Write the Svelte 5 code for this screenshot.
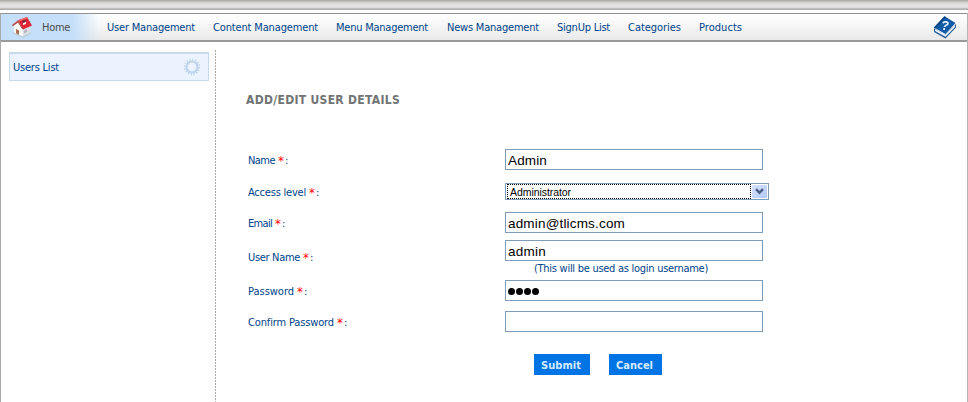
<script>
  const links = [
    { label: 'User Management', width: 88, gap: 18 },
    { label: 'Content Management', width: 105, gap: 18 },
    { label: 'Menu Management', width: 92, gap: 19 },
    { label: 'News Management', width: 92, gap: 18 },
    { label: 'SignUp List', width: 53, gap: 18 },
    { label: 'Categories', width: 53, gap: 18 },
    { label: 'Products', width: 43, gap: 0 }
  ];

  function fit(node, width) {
    const natural = node.getBoundingClientRect().width;
    node.style.letterSpacing = `${(width - natural) / node.textContent.length}px`;
  }
</script>

{#snippet label(text, width, top)}
  <div class="label" style:margin-top="{top}px">
    <span use:fit={width}>{text}</span><b>*</b><span>:</span>
  </div>
{/snippet}

<div class="page">
  <div class="strip"></div>
  <div class="shell">
    <nav>
      <div class="home">
        <svg width="22" height="22" viewBox="0 0 22 22">
          <path d="M1 17 4 16 12 20 20 16 20 18 12 22Z" fill="#a8b4a8" opacity=".4" />
          <path d="M11 12 19 8.5V16.5L11 20.5Z" fill="#dfe0e5" />
          <path d="M2.5 8.5 7 5 12 13V20.5L3 16.5Z" fill="#faf8f5" />
          <path d="M7 4.2 16 1 21 9.5 12 13.5Z" fill="#e02434" />
          <path d="M7 4.2 16 1 16.8 2.2 7.8 5.6Z" fill="#ee6a70" />
          <path d="M7 4.2 1 9 2 10.3 7 6.4 11 13 12.5 13.2Z" fill="#b8484c" />
          <path d="M12 5.5 15 4.5V8L12 9Z" fill="#fff" /><path d="M11.5 4.7 14.8 3.7V6L11.8 7.2Z" fill="#702630" />
          <path d="M5 13 8 14.5V18.8L5 17.3Z" fill="#a8714f" />
          <path d="M13 14.4 16 13V16L13 17.4Z" fill="#b3b7c1" />
        </svg>
        <span use:fit={28}>Home</span>
      </div>
      {#each links as l}
        <div class="link" style:width="{l.width}px" style:margin-right="{l.gap}px"><span use:fit={l.width}>{l.label}</span></div>
      {/each}
      <svg class="help" width="24" height="24" viewBox="0 0 24 24">
        <path d="M1 13 12 20 23 9V12.5L12.5 23.5 1 17Z" fill="#245c98" />
        <path d="M2 14 12.3 19.8 22 10V12L12.5 21.8 2 16Z" fill="#f2f7fc" />
        <path d="M1 12.5 11.5 1.2 22.5 8 12.5 19Z" fill="#125ba6" />
        <path d="M1 12.5 11.5 1.2 13 2.2 2.7 13.5Z" fill="#0a4482" />
        <path d="M9.8 8C11.5 6.4 15 6.6 15 8.5 15 10.2 12 9.8 11.5 12M10.2 14H12" fill="none" stroke="#d9eafa" stroke-width="1.8" />
      </svg>
    </nav>
    <div class="body">
      <aside>
        <div class="item">
          <span use:fit={46}>Users List</span>
          <svg width="18" height="18" viewBox="0 0 18 18" fill="none" stroke="#c0d5eb">
            <circle cx="9" cy="9" r="5.5" stroke-width="2.2" />
            <circle cx="9" cy="9" r="7.3" stroke-width="1.8" stroke-dasharray="1.35 1.516" />
          </svg>
        </div>
      </aside>
      <main>
        <h1><span use:fit={154}>ADD/EDIT USER DETAILS</span></h1>
        <form>
          <div class="labels">
            {@render label('Name', 27, 4)}
            {@render label('Access level', 58, 18)}
            {@render label('Email', 24, 17)}
            {@render label('User Name', 52, 20)}
            {@render label('Password', 46, 20)}
            {@render label('Confirm Password', 86, 17)}
          </div>
          <div class="fields">
            <div class="input"><span use:fit={39}>Admin</span></div>
            <div class="select">
              <div class="value"><span use:fit={61}>Administrator</span></div>
              <div class="arrow">
                <svg width="9" height="7" viewBox="0 0 9 7"><path d="M1 1.2 4.5 4.7 8 1.2" fill="none" stroke="#4d6185" stroke-width="2.4" /></svg>
              </div>
            </div>
            <div class="input email"><span use:fit={117}>admin@tlicms.com</span></div>
            <div class="input user"><span use:fit={38}>admin</span></div>
            <div class="note"><span use:fit={174}>(This will be used as login username)</span></div>
            <div class="input"><i></i><i></i><i></i><i></i></div>
            <div class="input confirm"></div>
            <div class="buttons">
              <div class="button submit"><span use:fit={40}>Submit</span></div>
              <div class="button"><span use:fit={37}>Cancel</span></div>
            </div>
          </div>
        </form>
      </main>
    </div>
  </div>
</div>

<style>
  :global(body) { background: #fff; }
  .page, .page * { box-sizing: border-box; }
  .page {
    width: 968px; height: 402px; overflow: hidden;
    font: 11px/14px 'DejaVu Sans Condensed', 'DejaVu Sans', sans-serif;
    font-stretch: condensed; color: #00438a; white-space: nowrap;
  }
  svg { display: block; flex: none; }
  .strip {
    height: 10px; margin-bottom: 3px;
    background: linear-gradient(#aaa6a6 0, #b5b1b1 1px, #d0cdcd 2px, #dedcdc 4px, #e7e5e5 6px, #d8d6d6 8px, #a9a7a7 9px, #b9b7b7 10px);
  }
  .shell { height: 389px; border-left: 1px solid #aaa; border-right: 1px solid #b5b5b5; }
  nav {
    height: 29px; display: flex; align-items: center;
    border-top: 1px solid #909090; border-bottom: 2px solid #999;
    background: linear-gradient(#fff, #f6f6f6 45%, #e9e9e9);
  }
  .home {
    width: 106px; height: 26px; padding: 0 0 0 10px; display: flex; align-items: center; gap: 9px; color: #4c4c4c;
    background: linear-gradient(90deg, #c5dffb 0, #c5dffb 72px, transparent 98px);
  }
  .home span { padding-top: 2px; }
  .link { flex: none; padding-top: 2px; }
  .help { margin-left: auto; margin-right: 10px; }
  .body { display: flex; padding-top: 8px; }
  aside { width: 214px; padding: 2px 0 0 8px; }
  .item {
    width: 200px; height: 29px; padding: 0 7px 0 3px; display: flex; align-items: center; justify-content: space-between;
    border: 1px solid #c7daed; border-top-width: 2px; background: #ebf4fe;
  }
  .item span { padding-top: 2px; }
  main {
    height: 360px; flex: 1; padding: 43px 0 0 31px;
    background: repeating-linear-gradient(#aaa 0 2px, transparent 2px 3px) 0 0 / 1px 100% no-repeat;
  }
  h1 { margin: 0; font-size: 12px; line-height: 15px; font-weight: 700; color: #707474; }
  form { display: flex; padding: 41px 0 0 2px; }
  .labels { width: 257px; padding-top: 1px; }
  .label { height: 14px; display: flex; }
  .label b { color: #f00; font-weight: 400; font-size: 13px; margin-left: 3px; width: 7px; }
  .fields { width: 264px; }
  .input {
    width: 258px; height: 21px; padding: 2px 0 0 2px; display: flex; align-items: center;
    border: 1px solid #7f9db9; background: #fff; color: #000; font: 13.5px/17px 'Liberation Sans', sans-serif;
  }
  .input i { width: 7px; height: 7px; margin-right: 1px; border-radius: 50%; background: #000; }
  .select {
    height: 17px; margin: 13px 0 12px; padding: 1px; display: flex; border: 1px solid #7f9db9;
    color: #000; font: 10.5px/13px 'Liberation Sans', sans-serif;
  }
  .value { width: 245px; height: 15px; margin-top: -1px; padding-left: 2px; border: 1px dotted #000; line-height: 14px; }
  .arrow {
    width: 15px; height: 13px; margin-left: 1px; display: flex; align-items: center; justify-content: center;
    border-radius: 1px; background: linear-gradient(135deg, #d7e3fe, #b3c8f7);
  }
  .user { margin-top: 7px; }
  .note { height: 19px; padding: 1px 0 0 29px; }
  .confirm { margin-top: 10px; }
  .buttons { display: flex; gap: 19px; padding: 22px 0 0 29px; }
  .button {
    width: 53px; height: 21px; flex: none; display: flex; align-items: center; padding: 2px 0 0 7px;
    background: #0074e4; color: #d5ebff; font-weight: 700;
  }
  .submit { width: 56px; }
</style>
